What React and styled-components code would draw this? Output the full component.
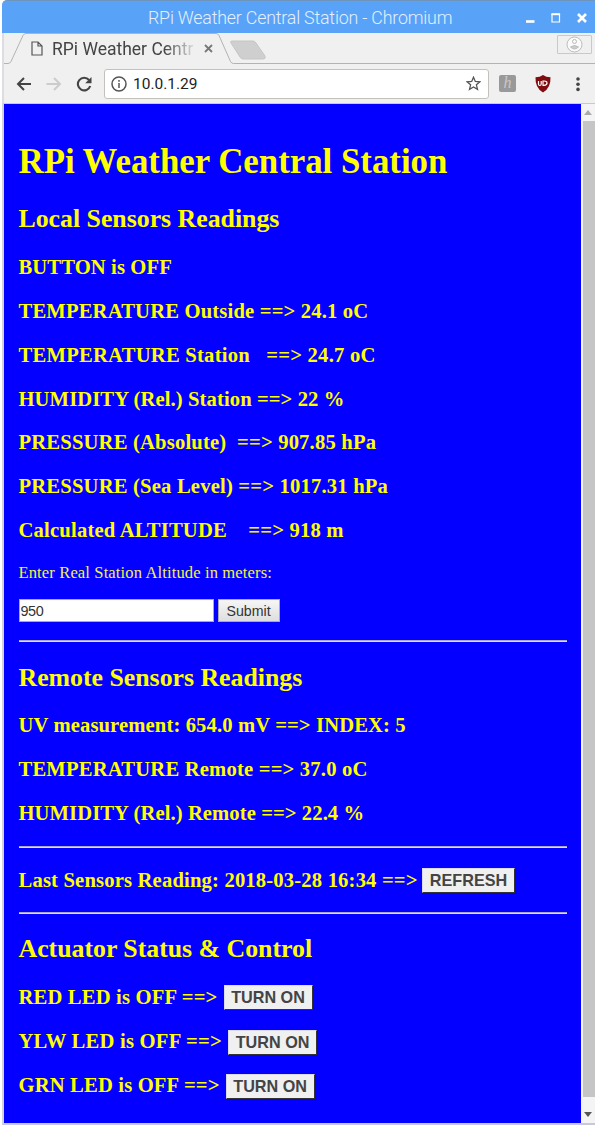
import React from 'react';
import styled, { createGlobalStyle } from 'styled-components';

const Global = createGlobalStyle`
  * { box-sizing: border-box; }
  html, body { margin: 0; padding: 0; background: #fff; overflow: hidden; }
  svg { display: block; flex: none; }
`;

const Window = styled.div`
  width: 595px;
  height: 1125px;
  padding-left: 2px;
  display: flex;
  flex-direction: column;
  overflow: hidden;
  background: #fff;
  font-family: Roboto, sans-serif;
`;

const TitleBar = styled.header`
  height: 33px;
  flex: none;
  display: flex;
  align-items: center;
  padding: 1px 6px 0 146px;
  background: #58a3f8;
  border-top: 1px solid #7095bd;
  border-top-left-radius: 5px;
`;

const WindowTitle = styled.div`
  flex: 1;
  font-size: 17.8px;
  font-weight: 300;
  letter-spacing: ${(p) => p.$spacing}px;
  color: #e3effd;
  white-space: nowrap;
`;

const TabStrip = styled.div`
  position: relative;
  height: 31px;
  flex: none;
  display: flex;
  justify-content: space-between;
  background: #f0f0f0;
  border-left: 2px solid #dcdce2;
`;

const TabShape = styled.svg`
  position: absolute;
  inset: 0;
`;

const TabContent = styled.div`
  position: relative;
  display: flex;
  align-items: center;
  height: 31px;
  padding-left: 27px;
`;

const TabLabel = styled.div`
  width: 152px;
  margin-left: 9px;
  white-space: nowrap;
  font-size: 17.5px;
  letter-spacing: ${(p) => p.$spacing}px;
  color: #444;
  mask-image: linear-gradient(90deg, #000 112px, transparent 146px);
`;

const ProfileButton = styled.div`
  position: relative;
  width: 35px;
  height: 19px;
  margin: 2px 3px 0 0;
  display: flex;
  align-items: center;
  justify-content: center;
  border: 1px solid #c9c9c9;
  border-radius: 1px;
`;

const Toolbar = styled.div`
  height: 40px;
  flex: none;
  display: flex;
  align-items: center;
  padding-left: 12px;
  background: #f0f0f0;
  border-left: 2px solid #dcdce2;
  border-bottom: 1px solid #c8c8d4;
`;

const NavIcons = styled.div`
  display: flex;
  align-items: center;
  width: 88px;
  gap: 14px;
`;

const AddressBar = styled.div`
  width: 385px;
  height: 30px;
  display: flex;
  align-items: center;
  padding: 0 7px 0 6px;
  background: #fff;
  border: 1px solid #c4c1bd;
  border-radius: 3px;
`;

const Address = styled.div`
  flex: 1;
  margin-left: 6px;
  font-size: 15.5px;
  color: #222;
`;

const Extensions = styled.div`
  display: flex;
  align-items: center;
  margin-left: 10px;
`;

const HBadge = styled.div`
  width: 17px;
  height: 17px;
  margin-right: 19px;
  border-radius: 2px;
  background: #999;
  color: #c8c8c8;
  font: italic 16px/16px 'Liberation Serif', serif;
  text-align: center;
`;

const MenuDots = styled.svg`
  margin-left: 25px;
`;

const Viewport = styled.div`
  flex: 1;
  display: flex;
  min-height: 0;
  border-left: 2px solid #d2d2da;
  border-bottom: 2px solid #c8c8d8;
`;

const Page = styled.main`
  width: 577px;
  padding: 33px 14px 0 14.5px;
  background: #0400ff;
  color: #ff0;
  font-family: 'Liberation Serif', serif;
  white-space: pre;
`;

const Heading = styled.h1`
  margin: 0 0 5px;
  font-size: 34.8px;
  line-height: 50px;
`;

const SectionTitle = styled.h2`
  margin: 0;
  font-size: 25.8px;
  line-height: 53px;
`;

const Reading = styled.h3`
  display: flex;
  align-items: center;
  margin: 0;
  padding-top: ${(p) => p.$drop || 0}px;
  height: ${(p) => p.$height || 44}px;
  font-size: 20.6px;
  letter-spacing: ${(p) => p.$spacing || 0}px;
`;

const Prompt = styled.p`
  margin: 0;
  padding-top: 1px;
  font-size: 16.5px;
  line-height: 39px;
  color: #f2f250;
  letter-spacing: ${(p) => p.$spacing || 0}px;
`;

const AltitudeForm = styled.form`
  display: flex;
  gap: 4px;
  padding: 7px 0 18px;
`;

const AltitudeInput = styled.input`
  width: 195px;
  height: 23px;
  padding: 0 1px;
  border: 1px solid #a9a9b8;
  border-radius: 0;
  outline: none;
  background: #fff;
  color: #333;
  font: 14.4px 'Liberation Sans', sans-serif;
  letter-spacing: -0.4px;
`;

const SubmitButton = styled.button`
  width: 62px;
  height: 23px;
  padding: 0;
  border: 1px solid #a9a9b4;
  border-radius: 0;
  background: linear-gradient(#f6f6f6, #dedede);
  color: #333;
  font: 14.2px 'Liberation Sans', sans-serif;
`;

const Rule = styled.hr`
  height: 2px;
  margin: ${(p) => p.$before || 0}px 0 ${(p) => p.$after}px;
  border: 0;
  background: linear-gradient(#a9a9c4 50%, #d9d9e8 50%);
`;

const ActionButton = styled.button`
  width: ${(p) => p.$width}px;
  height: 25px;
  margin: 1px 0 0 ${(p) => p.$gap || 6}px;
  padding: 0;
  border: 1px solid;
  border-color: #dcdce8 #333 #333 #dcdce8;
  border-radius: 0;
  background: #f0f0f0;
  color: #444;
  font: bold 16.2px 'Liberation Sans', sans-serif;
`;

const Scrollbar = styled.div`
  width: 14px;
  flex: 1;
  display: flex;
  flex-direction: column;
  align-items: center;
  background: #f4f4f5;
`;

const ScrollArrow = styled.svg`
  height: ${(p) => p.$height}px;
`;

const ScrollThumb = styled.div`
  flex: 1;
  align-self: stretch;
  margin-left: 2px;
  background: #c5c5c5;
`;

const local = [
  ['BUTTON is OFF', 0.12],
  ['TEMPERATURE Outside ==> 24.1 oC', 0.18],
  ['TEMPERATURE Station   ==> 24.7 oC', 0.25],
  ['HUMIDITY (Rel.) Station ==> 22 %', 0.1],
  ['PRESSURE (Absolute)  ==> 907.85 hPa', 0.19],
  ['PRESSURE (Sea Level) ==> 1017.31 hPa', 0.2],
  ['Calculated ALTITUDE    ==> 918 m', 0.2],
];

const remote = [
  ['UV measurement: 654.0 mV ==> INDEX: 5', 0.13],
  ['TEMPERATURE Remote ==> 37.0 oC', 0.2],
  ['HUMIDITY (Rel.) Remote ==> 22.4 %', 0.09],
];

const actuators = [
  ['RED LED is OFF ==>', 0.18],
  ['YLW LED is OFF ==>', 0.24],
  ['GRN LED is OFF ==>', 0.17],
];

const Lines = ({ items, height, drop }) =>
  items.map(([text, spacing]) => (
    <Reading key={text} $spacing={spacing} $height={height} $drop={drop}>{text}</Reading>
  ));

const WindowControls = () => (
  <svg width="64" height="20" fill="none" stroke="#fff">
    <path d="M1 13.5h8.500" strokeWidth="2.6" />
    <path d="M27 6.5h7.500v7.500h-7.500z" strokeWidth="1.2" />
    <path d="M26.4 6.2h8.700" strokeWidth="2" />
    <path d="M53 6l8 8M61 6l-8 8" strokeWidth="2.6" />
  </svg>
);

const BrowserTabs = () => (
  <TabStrip>
    <TabShape width="591" height="31" fill="none">
      <path d="M0 30.5h4q2 0 3-2L19 2.500q1-2 3-2h190q2 0 3 2l11.500 26q1 2 3 2H591" stroke="#b3b3b3" />
      <path d="M228 8h21q2 0 3 2l9 13q1 3-2 3h-20q-2 0-3-2l-9-14q-1-2 1-2z" fill="#cfcfcf" stroke="#c6c6c6" />
    </TabShape>
    <TabContent>
      <svg width="12" height="15" fill="none" stroke="#555" strokeWidth="1.2">
        <path d="M1 1h6l4 4v9H1zM7 1v4h4" />
      </svg>
      <TabLabel $spacing={0}>RPi Weather Centr</TabLabel>
      <svg width="9" height="9" stroke="#777" strokeWidth="1.8">
        <path d="M1 1l7 7M8 1l-7 7" />
      </svg>
    </TabContent>
    <ProfileButton>
      <svg width="17" height="17" fill="none" stroke="#bbb">
        <circle cx="8.500" cy="8.500" r="7.500" fill="#fafafa" />
        <circle cx="8.500" cy="5.500" r="2" />
        <path d="M4.500 11q4-3 8 0-4 4-8 0z" fill="#ccc" />
      </svg>
    </ProfileButton>
  </TabStrip>
);

const BrowserToolbar = () => (
  <Toolbar>
    <NavIcons>
      <svg width="16" height="16" fill="none" stroke="#444" strokeWidth="2">
        <path d="M15 8H2M8 2L2 8 8 14" />
      </svg>
      <svg width="16" height="16" fill="none" stroke="#ccc" strokeWidth="2">
        <path d="M.5 8H14M8 2L14 8 8 14" />
      </svg>
      <svg width="16" height="16" fill="none" stroke="#444" strokeWidth="2.1">
        <path d="M13 4A6.300 6.300 0 1 0 14.200 10" />
        <path d="M15.500 1v6.300H9.200z" fill="#444" stroke="none" />
      </svg>
    </NavIcons>
    <AddressBar>
      <svg width="16" height="16" fill="none" stroke="#555" strokeWidth="1.5">
        <circle cx="8" cy="8" r="7" />
        <path d="M8 7v5M8 4v1.700" />
      </svg>
      <Address>10.0.1.29</Address>
      <svg width="15" height="15" viewBox="0 0 15 15" fill="none" stroke="#555" strokeWidth="1.3">
        <path d="M7.500 1.200l1.800 4.200 4.600.4-3.500 3 1.100 4.500-4-2.400-4 2.400 1.100-4.500-3.500-3 4.600-.4z" />
      </svg>
    </AddressBar>
    <Extensions>
      <HBadge>h</HBadge>
      <svg width="16" height="18" fill="none">
        <path d="M8 0q3 2.300 7.500 2.300Q16 13 8 17.500 0 13 .5 2.300 5 2.300 8 0z" fill="#800c10" />
        <path d="M3.500 6v3q0 1.500 1.300 1.500T6.200 9V6M8 6v4.300h1q3-.2 3-2.300T9 6z" stroke="#fff" strokeWidth="1.2" />
      </svg>
      <MenuDots width="4" height="16" fill="#444">
        <circle cx="2" cy="3" r="1.800" />
        <circle cx="2" cy="8.200" r="1.800" />
        <circle cx="2" cy="13.400" r="1.800" />
      </MenuDots>
    </Extensions>
  </Toolbar>
);

export default function App() {
  return (
    <Window>
      <Global />
      <TitleBar>
        <WindowTitle $spacing={-0.18}>RPi Weather Central Station - Chromium</WindowTitle>
        <WindowControls />
      </TitleBar>
      <BrowserTabs />
      <BrowserToolbar />
      <Viewport>
        <Page>
          <Heading>RPi Weather Central Station</Heading>
          <SectionTitle>Local Sensors Readings</SectionTitle>
          <Lines items={local} height={43.86} drop={1.2} />
          <Prompt $spacing={0.145}>Enter Real Station Altitude in meters:</Prompt>
          <AltitudeForm onSubmit={(e) => e.preventDefault()}>
            <AltitudeInput defaultValue="950" />
            <SubmitButton>Submit</SubmitButton>
          </AltitudeForm>
          <Rule $after={9} />
          <SectionTitle>Remote Sensors Readings</SectionTitle>
          <Lines items={remote} height={43.85} />
          <Rule $before={10.45} $after={10} />
          <Reading $spacing={0.18} $drop={0.6}>
            Last Sensors Reading: 2018-03-28 16:34 ==&gt;
            <ActionButton $width={93} $gap={4.4}>REFRESH</ActionButton>
          </Reading>
          <Rule $before={10} $after={8} />
          <SectionTitle>Actuator Status &amp; Control</SectionTitle>
          {actuators.map(([text, spacing]) => (
            <Reading key={text} $spacing={spacing} $height={44.4}>
              {text}
              <ActionButton $width={89}>TURN ON</ActionButton>
            </Reading>
          ))}
        </Page>
        <Scrollbar>
          <ScrollArrow width="10" $height={17} viewBox="0 0 10 17">
            <path d="M1 11l4-5 4 5z" fill="#aaa" />
          </ScrollArrow>
          <ScrollThumb />
          <ScrollArrow width="10" $height={26} viewBox="0 0 10 26">
            <path d="M1 15l4 5 4-5z" fill="#555" />
          </ScrollArrow>
        </Scrollbar>
      </Viewport>
    </Window>
  );
}
